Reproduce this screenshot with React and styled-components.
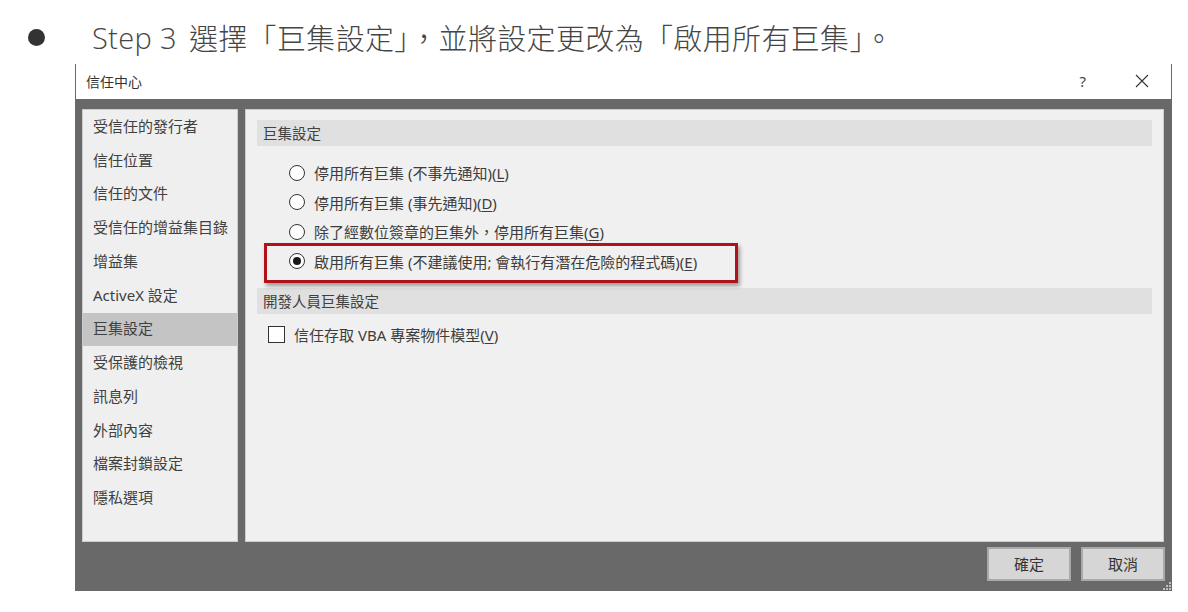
import React from "react";
import styled, { createGlobalStyle } from "styled-components";

const UI_FONT = `"Noto Sans", "Noto Sans CJK TC", sans-serif`;

const GlobalStyle = createGlobalStyle`
  html, body {
    margin: 0;
    padding: 0;
    background: #ffffff;
  }
  body {
    font-family: ${UI_FONT};
    color: #3d3d3d;
  }
`;

const Page = styled.div`
  width: 1188px;
  height: 612px;
  overflow: hidden;
  background: #fff;
`;

const Heading = styled.div`
  display: flex;
  align-items: center;
  height: 54px;
  padding: 10px 0 0 28px;
  font-family: "Open Sans", "Noto Sans CJK TC", sans-serif;
  font-size: 29px;
  font-weight: 300;
  color: #454545;
  letter-spacing: 0.35px;

  .bullet {
    width: 17px;
    height: 17px;
    border-radius: 50%;
    background: #333;
    margin-right: 47px;
    flex: none;
  }
  .step {
    margin-right: 12px;
  }
`;

const Dialog = styled.div`
  margin-left: 75px;
  width: 1097px;
  display: flex;
  flex-direction: column;
`;

const TitleBar = styled.div`
  height: 35px;
  display: flex;
  align-items: center;
  padding: 0 22px 2px 10px;
  box-sizing: border-box;
  border-left: 1px solid #6a6a6a;
  border-right: 1px solid #6a6a6a;
  font-size: 14px;
  color: #333;

  .title {
    flex: 1;
  }
  .help {
    font-size: 15px;
    color: #444;
    margin-right: 49px;
  }
`;

const Body = styled.div`
  position: relative;
  height: 492px;
  background: #696969;
  padding: 10px 7px 0 7px;
  box-sizing: border-box;
  display: flex;
  flex-direction: column;
`;

const Panes = styled.div`
  display: grid;
  grid-template-columns: 156px 919px;
  gap: 7px;
  height: 433px;
`;

const Sidebar = styled.ul`
  list-style: none;
  margin: 0;
  padding: 0;
  background: #efefef;
  border: 1px solid #cdcdcd;
  box-sizing: border-box;
`;

const NavItem = styled.li`
  height: 33.75px;
  box-sizing: border-box;
  display: flex;
  align-items: center;
  padding: 0 0 3px 10px;
  font-size: 15px;
  color: #404040;
  background: ${(p) => (p.$active ? "#c4c4c4" : "transparent")};
`;

const Main = styled.div`
  background: #f0f0f0;
  border: 1px solid #cdcdcd;
  box-sizing: border-box;
  padding: 10px 11px 0 11px;
`;

const SectionHeader = styled.div`
  height: 26px;
  box-sizing: border-box;
  display: flex;
  align-items: center;
  padding: 0 0 2px 6px;
  background: #e0e0e0;
  font-size: 14.5px;
  color: #404040;
  margin-top: ${(p) => p.$top || 0}px;
`;

const OptionList = styled.div`
  display: flex;
  flex-direction: column;
  margin-top: ${(p) => p.$top}px;
  padding-left: ${(p) => p.$indent}px;
`;

const Option = styled.label`
  position: relative;
  height: 29.5px;
  display: flex;
  align-items: center;
  gap: 9px;
  font-size: 15px;
  color: #3d3d3d;

  u {
    text-decoration: underline;
    text-underline-offset: 2px;
  }
`;

const Radio = styled.span`
  width: 16px;
  height: 16px;
  box-sizing: border-box;
  border-radius: 50%;
  border: 1px solid #333;
  background: #fff;
  display: flex;
  align-items: center;
  justify-content: center;
  flex: none;

  &::after {
    content: "";
    width: 8px;
    height: 8px;
    border-radius: 50%;
    background: #1a1a1a;
    display: ${(p) => (p.$checked ? "block" : "none")};
  }
`;

const Checkbox = styled.span`
  width: 17px;
  height: 17px;
  box-sizing: border-box;
  border: 1px solid #333;
  background: #fff;
  flex: none;
`;

const Highlight = styled.span`
  position: absolute;
  left: -25px;
  top: -4px;
  width: 474px;
  height: 40px;
  box-sizing: border-box;
  border: 3px solid #b0121c;
  box-shadow: 2px 3px 4px rgba(0, 0, 0, 0.35);
  pointer-events: none;
`;

const Footer = styled.div`
  display: flex;
  justify-content: flex-end;
  gap: 10px;
  margin-top: 5px;
`;

const Button = styled.button`
  width: 84px;
  height: 34px;
  background: #d6d6d6;
  border: 2px solid #a9a9a9;
  font-family: ${UI_FONT};
  font-size: 15px;
  color: #333;
  padding: 0 0 2px;
`;

const Grip = styled.svg`
  position: absolute;
  right: 1px;
  bottom: 1px;
`;

const navItems = [
  "受信任的發行者",
  "信任位置",
  "信任的文件",
  "受信任的增益集目錄",
  "增益集",
  "ActiveX 設定",
  "巨集設定",
  "受保護的檢視",
  "訊息列",
  "外部內容",
  "檔案封鎖設定",
  "隱私選項",
];

const macroOptions = [
  { text: "停用所有巨集 (不事先通知)(", key: "L" },
  { text: "停用所有巨集 (事先通知)(", key: "D" },
  { text: "除了經數位簽章的巨集外，停用所有巨集(", key: "G" },
  { text: "啟用所有巨集 (不建議使用; 會執行有潛在危險的程式碼)(", key: "E", checked: true },
];

export default function App() {
  return (
    <Page>
      <GlobalStyle />
      <Heading>
        <span className="bullet" />
        <span className="step">Step 3</span>
        <span>選擇「巨集設定」，並將設定更改為「啟用所有巨集」。</span>
      </Heading>

      <Dialog>
        <TitleBar>
          <span className="title">信任中心</span>
          <span className="help">?</span>
          <svg width="14" height="14" viewBox="0 0 14 14">
            <path d="M1 1 L13 13 M13 1 L1 13" stroke="#333" strokeWidth="1.1" fill="none" />
          </svg>
        </TitleBar>

        <Body>
          <Panes>
            <Sidebar>
              {navItems.map((item) => (
                <NavItem key={item} $active={item === "巨集設定"}>
                  {item}
                </NavItem>
              ))}
            </Sidebar>

            <Main>
              <SectionHeader>巨集設定</SectionHeader>
              <OptionList $indent={32} $top={12}>
                {macroOptions.map((opt) => (
                  <Option key={opt.key}>
                    {opt.checked && <Highlight />}
                    <Radio $checked={opt.checked} />
                    <span>
                      {opt.text}
                      <u>{opt.key}</u>)
                    </span>
                  </Option>
                ))}
              </OptionList>

              <SectionHeader $top={12}>開發人員巨集設定</SectionHeader>
              <OptionList $indent={11} $top={6}>
                <Option>
                  <Checkbox />
                  <span>
                    信任存取 VBA 專案物件模型(<u>V</u>)
                  </span>
                </Option>
              </OptionList>
            </Main>
          </Panes>

          <Footer>
            <Button>確定</Button>
            <Button>取消</Button>
          </Footer>

          <Grip width="8" height="8" viewBox="0 0 8 8">
            <rect x="6" y="0" width="2" height="2" fill="#bdbdbd" />
            <rect x="3" y="3" width="2" height="2" fill="#bdbdbd" />
            <rect x="6" y="3" width="2" height="2" fill="#bdbdbd" />
            <rect x="0" y="6" width="2" height="2" fill="#bdbdbd" />
            <rect x="3" y="6" width="2" height="2" fill="#bdbdbd" />
            <rect x="6" y="6" width="2" height="2" fill="#bdbdbd" />
          </Grip>
        </Body>
      </Dialog>
    </Page>
  );
}
